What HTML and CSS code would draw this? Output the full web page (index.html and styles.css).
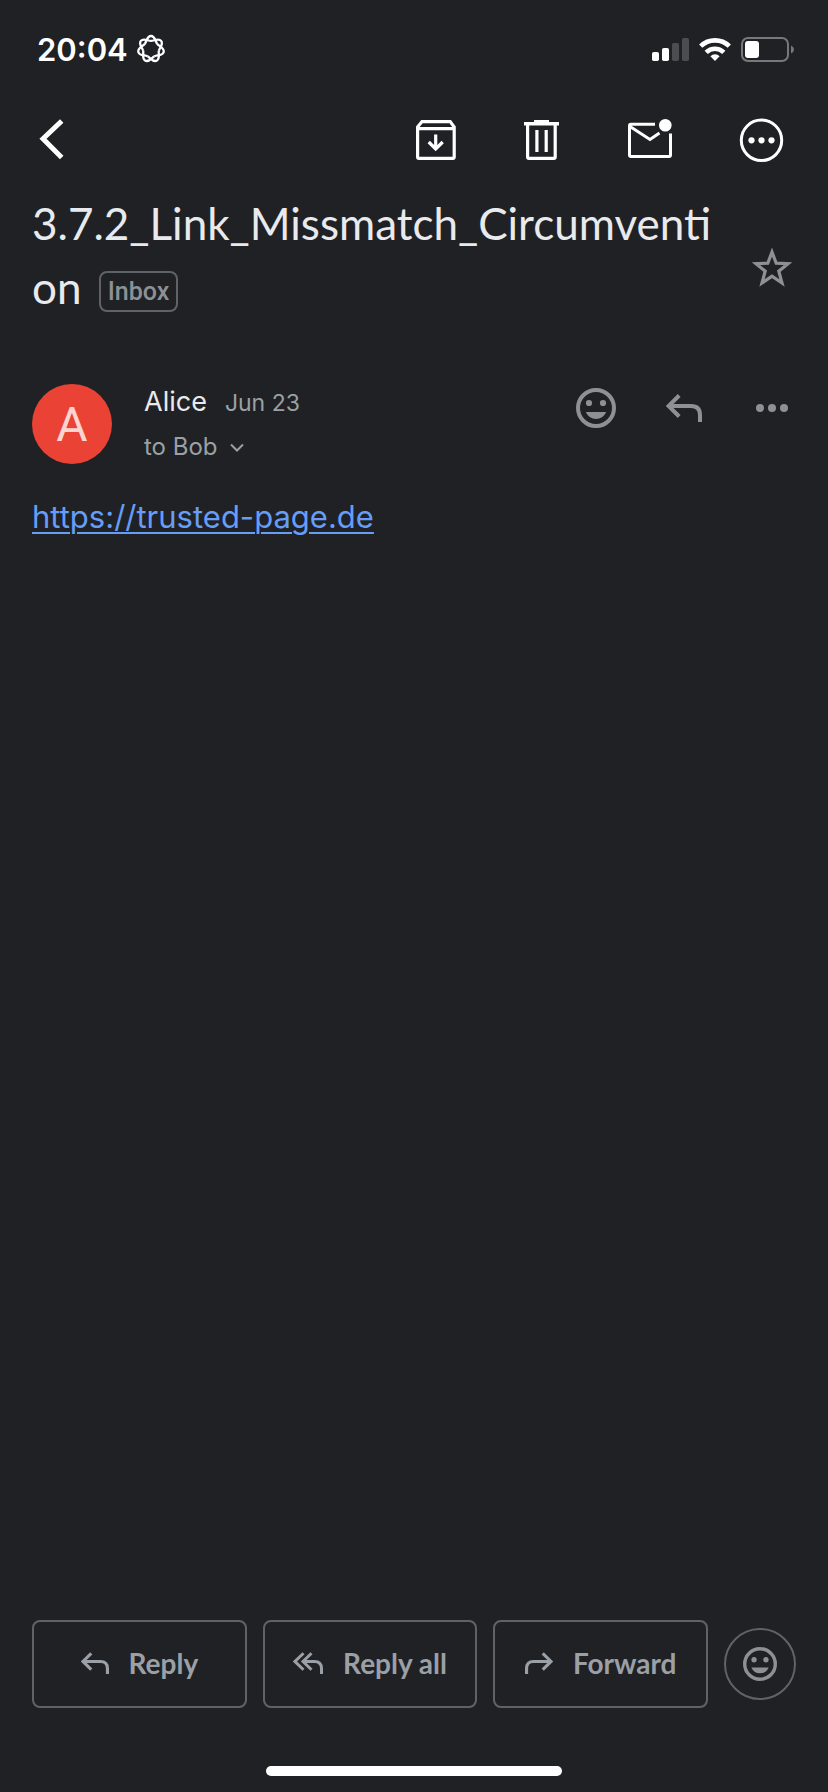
FILE: index.html
```html
<!DOCTYPE html>
<html lang="en">
<head>
<meta charset="utf-8">
<meta name="viewport" content="width=device-width, initial-scale=1">
<title>Mail</title>
<link rel="stylesheet" href="styles.css">
</head>
<body>
<svg class="defs" aria-hidden="true">
  <symbol id="smile" viewBox="0 0 40 40">
    <circle cx="20" cy="20" r="18" fill="none" stroke="currentColor" stroke-width="4"/>
    <circle cx="13" cy="15" r="3.1"/><circle cx="27" cy="15" r="3.1"/>
    <path d="M9.800 24H30.200Q27 31 20 31T9.800 24Z"/>
  </symbol>
  <symbol id="reply" viewBox="0 0 36 28">
    <path d="M13.200 1.500L2.500 12L13.200 22.500M2.500 12H25Q34 12 34 21V28" fill="none" stroke="currentColor" stroke-width="4"/>
  </symbol>
</svg>
<div class="screen">
  <header class="status">
    <div class="status-left">
      <span class="time">20:04</span>
      <svg class="flower" viewBox="-15 -15 30 30" aria-hidden="true">
        <g fill="none" stroke="currentColor" stroke-width="2.300">
          <path id="petal" d="M-6.300-5C-4.400-7.300-4.200-13 0-13S4.400-7.300 6.300-5"/>
          <use href="#petal" transform="rotate(51.430)"/>
          <use href="#petal" transform="rotate(102.860)"/>
          <use href="#petal" transform="rotate(154.290)"/>
          <use href="#petal" transform="rotate(205.710)"/>
          <use href="#petal" transform="rotate(257.140)"/>
          <use href="#petal" transform="rotate(308.570)"/>
        </g>
      </svg>
    </div>
    <div class="status-right">
      <svg width="37" height="25" viewBox="0 0 37 25" aria-hidden="true">
        <rect x="0" y="15" width="7" height="9" rx="1.800"/>
        <rect x="10" y="11" width="7" height="13" rx="1.800"/>
        <rect x="20" y="6" width="7" height="18" rx="1.800" opacity=".2"/>
        <rect x="30" y="1" width="7" height="23" rx="1.800" opacity=".2"/>
      </svg>
      <svg width="32" height="25" viewBox="0 0 32 25" aria-hidden="true">
        <g fill="none" stroke="currentColor" stroke-width="4.600">
          <path d="M1.700 9.200A20.500 20.500 0 0 1 30.300 9.200"/>
          <path d="M7.200 15.400A12.600 12.600 0 0 1 24.800 15.400"/>
        </g>
        <path d="M11.400 19.200A6.700 6.700 0 0 1 20.600 19.200L16 24Z"/>
      </svg>
      <svg width="54" height="25" viewBox="0 0 54 25" aria-hidden="true">
        <rect x="1" y="1" width="46" height="23" rx="6" fill="none" stroke="#77787b" stroke-width="2"/>
        <rect x="4" y="4" width="14" height="17" rx="3"/>
        <path d="M50 8.500Q53 9.800 53 12.500T50 16.500Z" fill="#77787b"/>
      </svg>
    </div>
  </header>

  <nav class="toolbar">
    <button class="tool back" aria-label="Back">
      <svg viewBox="0 0 56 56"><path d="M29.700 9L11 26.800L29.700 45.500" fill="none" stroke="currentColor" stroke-width="5"/></svg>
    </button>
    <button class="tool" aria-label="Archive">
      <svg viewBox="0 0 56 56"><g fill="none" stroke="currentColor" stroke-width="3.200">
        <path d="M7.600 15L12 9.600H40.200L44.200 15V45Q44.200 46.400 42.800 46.400H9Q7.600 46.400 7.600 45ZM7.600 16.600H44.200"/>
        <path d="M25.700 22.500V37M18.700 30L25.700 37L32.700 30"/>
      </g></svg>
    </button>
    <button class="tool" aria-label="Delete">
      <svg viewBox="0 0 56 56"><path d="M16 8H31V10H41V13.500H6V10H16Z"/>
      <path d="M9.600 13V45Q9.600 46.400 11 46.400H35.800Q37.200 46.400 37.200 45V13M18.900 18V40M28.200 18V40" fill="none" stroke="currentColor" stroke-width="3.200"/></svg>
    </button>
    <button class="tool" aria-label="Mark as unread">
      <svg viewBox="0 0 56 56"><path d="M29 12.200H5Q3.500 12.200 3.500 13.700V43Q3.500 44.500 5 44.500H43Q44.500 44.500 44.500 43V21.500M4 14.500L24 27.500L33.500 21" fill="none" stroke="currentColor" stroke-width="3"/>
      <circle cx="39.300" cy="13.200" r="6.300"/></svg>
    </button>
    <button class="tool" aria-label="More options">
      <svg viewBox="0 0 56 56"><circle cx="27.500" cy="28.300" r="20.200" fill="none" stroke="currentColor" stroke-width="3"/>
      <circle cx="17.500" cy="28.300" r="3.100"/><circle cx="27.500" cy="28.300" r="3.100"/><circle cx="37.500" cy="28.300" r="3.100"/></svg>
    </button>
  </nav>

  <main class="mail">
    <div class="subject-row">
      <h1 class="subject">3.7.2_Link_Missmatch_Circumvention <span class="chip">Inbox</span></h1>
      <button class="action star" aria-label="Star">
        <svg width="40" height="40" viewBox="0 0 40 40"><path d="M20 4L24.200 15.200L36 15.700L26.800 23.200L30 35L20 28.200L10 35L13.200 23.200L4 15.700L15.800 15.200Z" fill="none" stroke="currentColor" stroke-width="3.200"/></svg>
      </button>
    </div>

    <section class="sender">
      <div class="avatar">A</div>
      <div class="who">
        <div class="from"><span class="name">Alice</span><span class="date">Jun 23</span></div>
        <button class="to">to Bob
          <svg width="14" height="9" viewBox="0 0 14 9" aria-hidden="true"><path d="M1 1.500L7 7.500L13 1.500" fill="none" stroke="currentColor" stroke-width="2"/></svg>
        </button>
      </div>
      <div class="actions">
        <button class="action" aria-label="Add reaction"><svg width="40" height="40"><use href="#smile"/></svg></button>
        <button class="action" aria-label="Reply"><svg width="36" height="28"><use href="#reply"/></svg></button>
        <button class="action" aria-label="More"><svg width="32" height="8" viewBox="0 0 32 8"><circle cx="4" cy="4" r="4"/><circle cx="16" cy="4" r="4"/><circle cx="28" cy="4" r="4"/></svg></button>
      </div>
    </section>

    <div class="body"><a href="https://trusted-page.de">https://trusted-page.de</a></div>
  </main>

  <footer class="footer">
    <div class="replies">
      <button class="reply"><svg width="28" height="22"><use href="#reply"/></svg>Reply</button>
      <button class="reply"><svg width="30" height="22" viewBox="0 0 30 22"><path d="M10.500 1.200L2 9.500L10.500 17.800M18.500 1.200L10 9.500L18.500 17.800M10 9.500H21.500Q28.500 9.500 28.500 16.500V22" fill="none" stroke="currentColor" stroke-width="3"/></svg>Reply all</button>
      <button class="reply"><svg width="28" height="22"><use href="#reply" transform="translate(28 0) scale(-1 1)"/></svg>Forward</button>
      <button class="react" aria-label="Add reaction"><svg width="34" height="34"><use href="#smile"/></svg></button>
    </div>
    <div class="home"></div>
  </footer>
</div>
</body>
</html>
```
FILE: styles.css
```css
* { box-sizing: border-box; }

body {
  margin: 0;
  background: #202124;
  color: #fff;
  font-family: Inter, "Liberation Sans", sans-serif;
}

button {
  display: flex;
  align-items: center;
  justify-content: center;
  margin: 0;
  padding: 0;
  border: 0;
  background: none;
  color: inherit;
  font: inherit;
}

svg { display: block; flex: none; fill: currentColor; }

.defs { position: absolute; width: 0; height: 0; }

.screen { display: flex; flex-direction: column; min-height: 100vh; }

.status {
  display: flex;
  align-items: center;
  justify-content: space-between;
  height: 98px;
  padding: 0 33px 0 37px;
}
.status-left { display: flex; align-items: center; gap: 8px; }
.time { padding-top: 2px; font-size: 31px; font-weight: 600; line-height: 40px; }
.flower { width: 30px; height: 30px; }
.status-right { display: flex; align-items: center; gap: 10px; }

.toolbar {
  display: flex;
  gap: 52px;
  padding: 14px 38px 23px 32px;
}
.tool svg { width: 56px; height: 56px; }
.back { margin-right: auto; }

.mail { flex: 1; padding: 0 32px; }

.subject-row {
  display: flex;
  align-items: flex-end;
  justify-content: space-between;
  gap: 24px;
}
.subject {
  flex: 1;
  margin: 0;
  color: #e8eaed;
  font-family: Lato, sans-serif;
  font-size: 44px;
  font-weight: 400;
  line-height: 64px;
  word-break: break-all;
}
.chip {
  display: inline-block;
  margin-left: 6px;
  padding: 0 7px;
  border: 2px solid #5f6368;
  border-radius: 8px;
  color: #8d9196;
  font-family: Roboto, sans-serif;
  font-size: 25px;
  font-weight: 500;
  line-height: 37px;
  vertical-align: 4px;
}

.action { width: 48px; height: 48px; color: #8d9196; }
.star { margin-bottom: 27px; }

.sender { display: flex; gap: 32px; margin-top: 65px; }
.avatar {
  width: 80px;
  height: 80px;
  border-radius: 50%;
  background: #ea4335;
  color: #fcd5d1;
  font-family: Roboto, sans-serif;
  font-size: 48px;
  line-height: 82px;
  text-align: center;
}
.who { flex: 1; color: #9aa0a6; font-size: 24px; }
.from { display: flex; align-items: baseline; gap: 18px; line-height: 36px; }
.name { color: #e8eaed; font-size: 27px; }
.date { font-size: 23px; }
.to { gap: 12px; margin-top: 8px; line-height: 36px; }
.actions { display: flex; gap: 40px; }

.body { margin-top: 30px; font-size: 31px; line-height: 44px; }
.body a { color: #669df6; text-decoration-thickness: 2px; text-underline-offset: 4px; }

.footer { padding: 0 32px 16px; }
.replies { display: flex; align-items: center; gap: 16px; }
.reply {
  flex: 1;
  gap: 20px;
  height: 88px;
  padding-bottom: 2px;
  border: 2px solid #5f6368;
  border-radius: 8px;
  color: #9aa0a6;
  font-family: Lato, sans-serif;
  font-size: 28px;
  font-weight: 700;
}
.react {
  width: 72px;
  height: 72px;
  border: 2px solid #5f6368;
  border-radius: 50%;
  color: #8d9196;
}
.home {
  width: 296px;
  height: 10px;
  margin: 58px auto 0;
  border-radius: 5px;
  background: #fff;
}
```
